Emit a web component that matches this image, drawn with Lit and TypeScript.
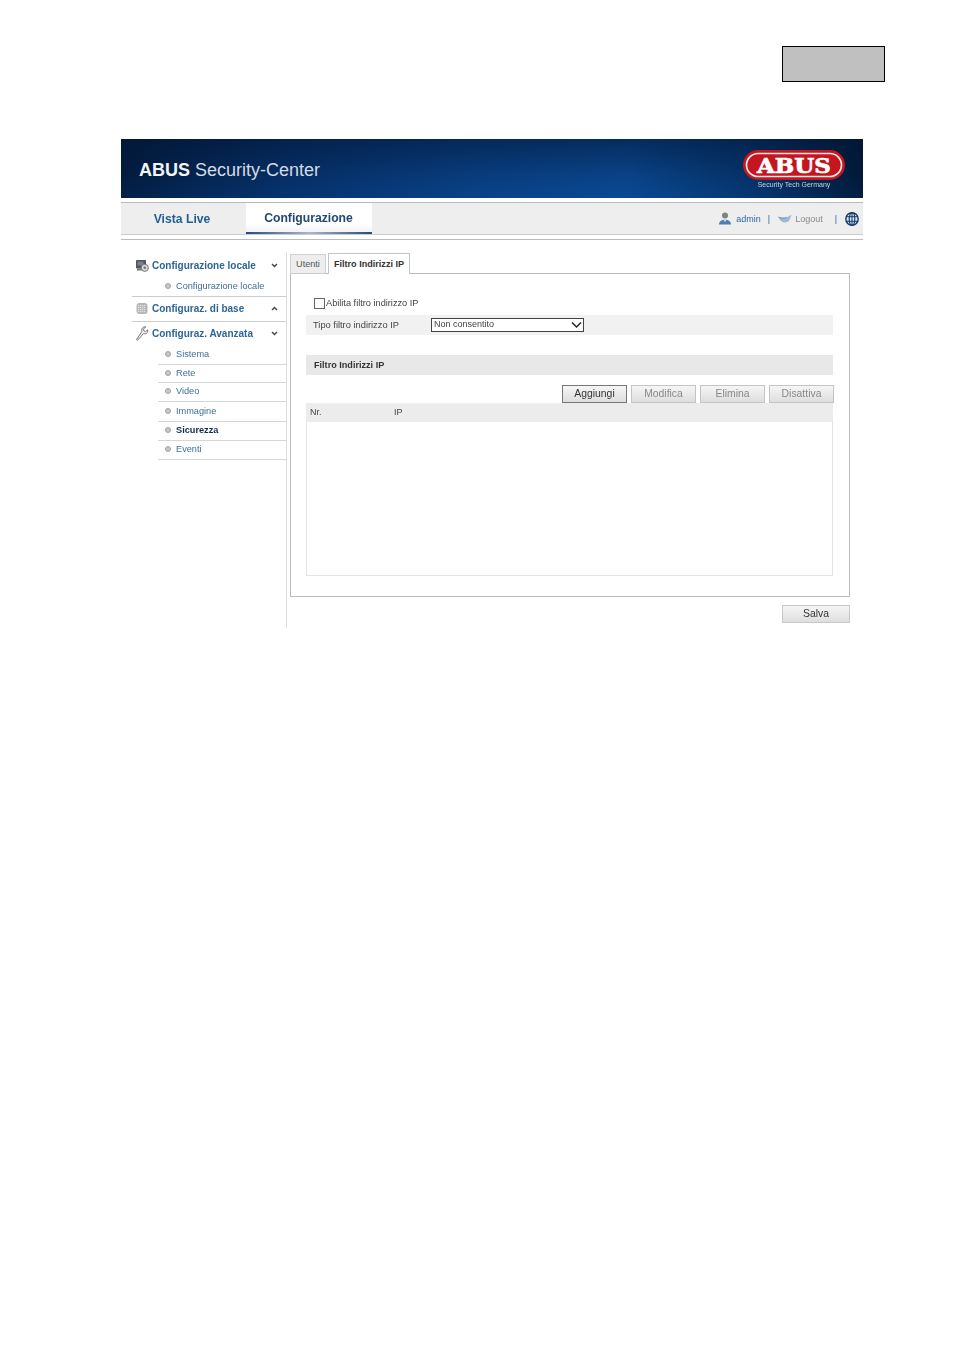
import { LitElement, html, svg, css } from "lit";
import { customElement } from "lit/decorators.js";

const chevDown = html`<svg class="chev" width="7" height="5" viewBox="0 0 7 5"><path d="M1 1l2.500 2.500L6 1" fill="none" stroke="#444" stroke-width="1.400"/></svg>`;
const chevUp = html`<svg class="chev" width="7" height="5" viewBox="0 0 7 5"><path d="M1 4l2.500-2.500L6 4" fill="none" stroke="#444" stroke-width="1.400"/></svg>`;

const iconLocal = html`<svg class="gi" width="14" height="13" viewBox="0 0 14 13">
  <rect x="1" y="1" width="10" height="8.500" rx="1" fill="#50555b"/>
  <rect x="2.500" y="2.500" width="6" height="4" fill="#7d828a"/>
  <rect x="2" y="9.500" width="6" height="2" fill="#777"/>
  <circle cx="9.800" cy="8.800" r="3.600" fill="#d8d8d8" stroke="#777"/>
  <circle cx="9.800" cy="8.800" r="1.300" fill="#777"/>
</svg>`;
const dots = [3.5, 5.5, 7.5, 9.5];
const iconBase = html`<svg class="gi" width="14" height="13" viewBox="0 0 14 13">
  <rect x="1.500" y="1" width="11" height="11" rx="3" fill="#b5b5b5"/>
  ${dots.map((y) => dots.map((x) => svg`<circle cx=${x} cy=${y} r=".75" fill="#e4e4e4"/>`))}
</svg>`;
const iconAdv = html`<svg class="gi" width="14" height="15" viewBox="0 0 14 15">
  <path d="M1.500 13.500l1 .8 6-6.800c1.500.6 3 .2 3.800-.9.600-.9.700-1.900.3-2.800L10.500 5.700 8.800 4.800l-.2-2L10.800 1C9.600.6 8.300 1 7.500 1.900 6.700 2.900 6.500 4.200 7 5.300z" fill="#f4f4f4" stroke="#666" stroke-width=".9" stroke-linejoin="round"/>
</svg>`;
const iconUser = html`<svg width="14" height="13" viewBox="0 0 14 13">
  <circle cx="7" cy="3.600" r="3" fill="#7f8479"/>
  <path d="M1 12.500c0-3 2.400-4.800 6-4.800s6 1.800 6 4.800z" fill="#4a7fb5"/>
  <path d="M5.500 7.700h3L7 10z" fill="#d9e4ee"/>
</svg>`;
const iconLogout = html`<svg width="14" height="9" viewBox="0 0 14 9">
  <path d="M.5 3C3 4.300 6 4.300 8.500 3.500L13.500.8 11.500 6c-1 1.600-2.500 2.500-4.500 2.500C3.500 8.500 1.500 6 .5 3z" fill="#9db9d4"/>
  <path d="M.5 3C3 4.300 6 4.300 8.500 3.500" fill="none" stroke="#5f7f9f" stroke-width=".9"/>
</svg>`;
const iconGlobe = html`<svg width="14" height="14" viewBox="0 0 14 14">
  <circle cx="7" cy="7" r="6.200" fill="#d5e1ed" stroke="#15396a" stroke-width="1.400"/>
  <ellipse cx="7" cy="7" rx="2.800" ry="6.200" fill="none" stroke="#15396a" stroke-width="1.100"/>
  <path d="M7 .7v12.600M1 4.700h12M1 9.300h12" stroke="#15396a"/>
</svg>`;

const logo = html`<svg class="logo" width="102" height="30" viewBox="0 0 102 30">
  <rect x="0" y="0" width="102" height="30" rx="15" fill="#c4161f"/>
  <rect x="3.500" y="3.500" width="95" height="23" rx="11.500" fill="#c4161f" stroke="#f4e8e8" stroke-width="1.700"/>
  <text x="51" y="22.500" text-anchor="middle" class="logotext" textLength="74" lengthAdjust="spacingAndGlyphs">ABUS</text>
</svg>`;

const items: [string, number, string][] = [
  ["Sistema", 20, ""],
  ["Rete", 18, ""],
  ["Video", 19, ""],
  ["Immagine", 20, ""],
  ["Sicurezza", 19, "sel"],
  ["Eventi", 19, ""],
];

@customElement("app-root")
export class AppRoot extends LitElement {
  static styles = css`
    :host { display: block; width: 955px; height: 1350px; background: #fff; font-family: "Liberation Sans", Arial, sans-serif; color: #333; }
    .page { display: flex; flex-direction: column; padding: 46px 0 0 121px; }
    .pagebox { margin-left: 661px; width: 103px; height: 36px; box-sizing: border-box; background: #c0c0c0; border: 1px solid #000; }
    .app { margin-top: 57px; width: 742px; filter: blur(.3px); }

    .banner { height: 59px; box-sizing: border-box; padding: 0 18px 0 18px; display: flex; align-items: center; justify-content: space-between;
      background:
        linear-gradient(180deg, rgba(2,20,50,.55) 0%, rgba(2,20,50,.15) 60%, rgba(10,70,150,.1) 100%),
        linear-gradient(90deg, #021d40 0%, #06326c 22%, #0a4288 48%, #0a4a94 68%, #06366f 85%, #021a38 100%); }
    .brand { font-size: 18px; color: #d5dbe3; white-space: nowrap; margin-top: 3px; }
    .brand b { color: #f2f4f7; }
    .logobox { display: flex; flex-direction: column; align-items: center; margin-top: 1px; height: 38px; }
    .logo { display: block; flex: none; }
    .logotext { font: 900 21px "DejaVu Serif", serif; fill: #fff; stroke: #fff; stroke-width: .7px; }
    .tag { font-size: 7px; line-height: 8px; margin-top: 1px; color: #c8d3e2; white-space: nowrap; }

    .nav { margin-top: 4px; height: 33px; box-sizing: border-box; display: flex; align-items: stretch; background: #eee; border-top: 1px solid #bbb; border-bottom: 1px solid #ccc; }
    .navtab { width: 125px; display: flex; align-items: center; justify-content: center; font-size: 12.200px; font-weight: bold; color: #1f5f96; padding-right: 3px; box-sizing: border-box; }
    .navtab.active { width: 126px; background: linear-gradient(180deg, #fff 0%, #fff 70%, #f3f3f3 100%); color: #21496f; border-bottom: 2px solid; border-image: linear-gradient(90deg, #1c4a80, #a9b8c8 50%, #1c4a80) 1; padding-right: 1px; }
    .tools { margin-left: auto; display: flex; align-items: center; padding-right: 4px; font-size: 9px; color: #888; }
    .tools .admin { color: #2b6aa0; margin-left: 4px; }
    .tools .sep { color: #2b6aa0; }
    .tools .sep.a { margin: 0 8px 0 7px; }
    .tools .sep.b { margin: 0 8px 0 12px; }
    .tools .out { margin-left: 3px; }
    .navline { margin-top: 4px; height: 1px; background: #bbb; }

    .body { display: flex; align-items: flex-start; }
    .side { width: 166px; box-sizing: border-box; height: 376px; margin-top: 12px; padding-left: 11px; border-right: 1px solid #ddd; flex: none; }
    .ghead { display: flex; align-items: center; height: 24px; box-sizing: border-box; font-size: 10px; font-weight: bold; color: #2d6595; padding-left: 3px; }
    .ghead.first { padding-top: 2px; }
    .ghead.line { border-bottom: 1px solid #ccc; height: 25px; padding-bottom: 2px; }
    .ghead.adv { height: 23px; padding-bottom: 1px; }
    .gi { flex: none; width: 14px; margin-right: 3px; }
    .ghead span { flex: 1; white-space: nowrap; }
    .chev { margin-right: 8px; flex: none; }
    .sub { margin-left: 26px; display: flex; align-items: center; box-sizing: border-box; font-size: 9.200px; color: #3d6f99; border-bottom: 1px solid #d6d6d6; padding: 0 0 2px 7px; white-space: nowrap; }
    .sub.wide { margin-left: 0; padding: 0 0 0 33px; height: 21px; border-color: #ccc; }
    .sub.sel { color: #102c4c; font-weight: bold; }
    .dot { border-radius: 50%; background: #c6c6c6; border: 1px solid #a2a2a2; width: 4px; height: 4px; margin-right: 5px; flex: none; }

    .main { margin-left: 3px; width: 560px; margin-top: 13px; }
    .tabs { display: flex; height: 21px; align-items: flex-end; position: relative; z-index: 1; }
    .tab { box-sizing: border-box; font-size: 9.100px; white-space: nowrap; display: flex; align-items: center; justify-content: center; border: 1px solid #d0d0d0; border-bottom: none; padding-bottom: 1px; }
    .tab.off { width: 36px; height: 20px; background: #eee; color: #555; margin-right: 2px; border-bottom: 1px solid #ccc; }
    .tab.on { width: 82px; height: 21px; background: #fff; color: #333; font-weight: bold; border-color: #c4c4c4; }
    .panel { box-sizing: border-box; height: 324px; margin-top: -1px; border: 1px solid #bbb; padding: 21px 16px 0 15px; }
    .chk { display: flex; align-items: center; height: 16px; padding-left: 8px; font-size: 9.200px; color: #444; white-space: nowrap; }
    .box { width: 9px; height: 9px; border: 1px solid #666; margin-right: 1px; background: #fff; flex: none; }
    .row { margin-top: 4px; height: 20px; box-sizing: border-box; padding: 0 0 1px 7px; background: #f1f1f1; display: flex; align-items: center; font-size: 9.300px; color: #444; white-space: nowrap; }
    .row label { width: 118px; flex: none; }
    .selwrap { position: relative; display: block; width: 153px; height: 14px; }
    .selwrap svg { position: absolute; right: 2px; top: 3px; pointer-events: none; }
    select { appearance: none; -webkit-appearance: none; display: block; width: 153px; height: 14px; box-sizing: border-box; border: 1px solid #444; border-radius: 0; background: #fff; font: 9px "Liberation Sans", Arial, sans-serif; color: #444; padding: 0 0 2px 2px; margin: 0; }
    .section { margin-top: 20px; height: 20px; background: #e8e8e8; display: flex; align-items: center; padding-left: 8px; font-size: 9.100px; font-weight: bold; color: #333; }
    .btns { margin-top: 10px; display: flex; justify-content: flex-end; gap: 4px; margin-right: -1px; }
    button { box-sizing: border-box; width: 65px; height: 18px; padding: 0 0 1px; font: 10.400px "Liberation Sans", Arial, sans-serif; color: #888; background: linear-gradient(180deg, #f6f6f6, #dedede); border: 1px solid #c4c4c4; border-radius: 0; }
    button.primary { color: #333; border-color: #777; }
    .thead { height: 19px; box-sizing: border-box; padding: 0 0 1px 4px; background: #ececec; display: flex; align-items: center; font-size: 9px; color: #444; }
    .thead span:first-child { width: 84px; }
    .tbody { height: 154px; box-sizing: border-box; border: 1px solid #e4e4e4; border-top: none; }
    .foot { display: flex; justify-content: flex-end; margin-top: 8px; }
    .foot button { width: 68px; color: #333; border-color: #c8c8c8; }
  `;

  render() {
    return html`<div class="page">
      <div class="pagebox"></div>
      <div class="app">
        <div class="banner">
          <div class="brand"><b>ABUS</b> Security-Center</div>
          <div class="logobox">${logo}<div class="tag">Security Tech Germany</div></div>
        </div>
        <div class="nav">
          <div class="navtab">Vista Live</div>
          <div class="navtab active">Configurazione</div>
          <div class="tools">
            ${iconUser}<span class="admin">admin</span>
            <span class="sep a">|</span>
            ${iconLogout}<span class="out">Logout</span>
            <span class="sep b">|</span>
            ${iconGlobe}
          </div>
        </div>
        <div class="navline"></div>
        <div class="body">
          <div class="side">
            <div class="ghead first">${iconLocal}<span>Configurazione locale</span>${chevDown}</div>
            <div class="sub wide"><i class="dot"></i>Configurazione locale</div>
            <div class="ghead line">${iconBase}<span>Configuraz. di base</span>${chevUp}</div>
            <div class="ghead adv">${iconAdv}<span>Configuraz. Avanzata</span>${chevDown}</div>
            ${items.map(([t, h, cls]) => html`<div class="sub ${cls}" style="height:${h}px"><i class="dot"></i>${t}</div>`)}
          </div>
          <div class="main">
            <div class="tabs">
              <div class="tab off">Utenti</div>
              <div class="tab on">Filtro Indirizzi IP</div>
            </div>
            <div class="panel">
              <div class="chk"><i class="box"></i>Abilita filtro indirizzo IP</div>
              <div class="row"><label>Tipo filtro indirizzo IP</label>
                <span class="selwrap">
                  <select><option>Non consentito</option></select>
                  <svg width="11" height="8" viewBox="0 0 11 8"><path d="M1 1.500l4.500 4.500L10 1.500" fill="none" stroke="#222" stroke-width="1.500"/></svg>
                </span>
              </div>
              <div class="section">Filtro Indirizzi IP</div>
              <div class="btns">
                <button class="primary">Aggiungi</button>
                <button>Modifica</button>
                <button>Elimina</button>
                <button>Disattiva</button>
              </div>
              <div class="thead"><span>Nr.</span><span>IP</span></div>
              <div class="tbody"></div>
            </div>
            <div class="foot"><button>Salva</button></div>
          </div>
        </div>
      </div>
    </div>`;
  }
}
